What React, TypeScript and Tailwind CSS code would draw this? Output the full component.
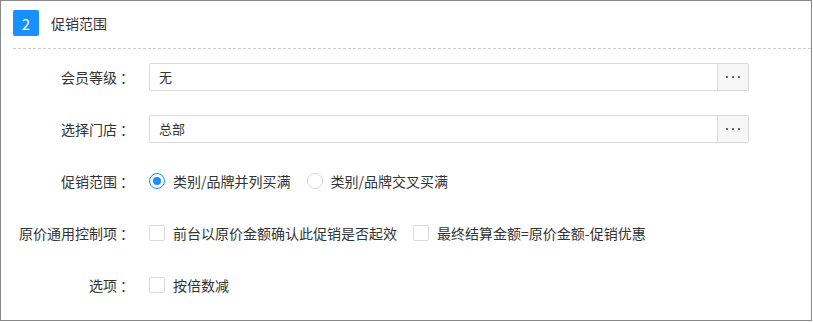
import React from "react";

const font = { fontFamily: '"Noto Sans CJK SC", "Noto Sans", sans-serif' };

function Label({ text }: { text: string }) {
  return (
    <div className="w-[130px] shrink-0 text-right text-[14px] leading-[20px] text-[#333]">
      {text}
      <span className="inline-block translate-x-[3px]">：</span>
    </div>
  );
}

function PickerInput({ value }: { value: string }) {
  return (
    <div className="ml-[18px] flex h-[28px] w-[600px] rounded-[2px] border border-[#d9d9d9] bg-white">
      <div className="flex flex-1 items-center pl-[9px] text-[13px] leading-[18px] text-[#333]">{value}</div>
      <div className="flex w-[31px] items-center justify-center gap-[4px] border-l border-[#d9d9d9] bg-[#f7f7f7]">
        <span className="h-[2px] w-[2px] bg-[#666]" />
        <span className="h-[2px] w-[2px] bg-[#666]" />
        <span className="h-[2px] w-[2px] bg-[#666]" />
      </div>
    </div>
  );
}

function Radio({ checked, text }: { checked?: boolean; text: string }) {
  return (
    <div className="mr-[16px] flex items-center">
      <span
        className={
          checked
            ? "flex h-[16px] w-[16px] items-center justify-center rounded-full border border-[#1890ff] bg-white"
            : "flex h-[16px] w-[16px] items-center justify-center rounded-full border border-[#d9d9d9] bg-white"
        }
      >
        {checked ? <span className="h-[8px] w-[8px] rounded-full bg-[#1890ff]" /> : null}
      </span>
      <span className="ml-[8px] text-[14px] leading-[20px] text-[#333]">{text}</span>
    </div>
  );
}

function Check({ text }: { text: string }) {
  return (
    <div className="mr-[16px] flex items-center">
      <span className="h-[16px] w-[16px] rounded-[2px] border border-[#d9d9d9] bg-white" />
      <span className="ml-[8px] text-[14px] leading-[20px] text-[#333]">{text}</span>
    </div>
  );
}

export default function App() {
  return (
    <div style={font} className="h-[321px] w-[812px] border border-[#888] bg-white">
      <div className="ml-[12px] flex items-center gap-[12px] border-b border-dashed border-[#ccc] pb-[12px] pt-[9px]">
        <div className="flex h-[26px] w-[26px] items-center justify-center rounded-[2px] bg-[#1890ff] text-[15px] leading-none text-white">
          2
        </div>
        <div className="text-[14px] leading-[20px] text-[#333]">促销范围</div>
      </div>
      <div className="mt-[2px]">
        <div className="flex h-[52px] items-center">
          <Label text="会员等级" />
          <PickerInput value="无" />
        </div>
        <div className="flex h-[52px] items-center">
          <Label text="选择门店" />
          <PickerInput value="总部" />
        </div>
        <div className="flex h-[52px] items-center">
          <Label text="促销范围" />
          <div className="ml-[18px] flex items-center">
            <Radio checked text="类别/品牌并列买满" />
            <Radio text="类别/品牌交叉买满" />
          </div>
        </div>
        <div className="flex h-[52px] items-center">
          <Label text="原价通用控制项" />
          <div className="ml-[18px] flex items-center">
            <Check text="前台以原价金额确认此促销是否起效" />
            <Check text="最终结算金额=原价金额-促销优惠" />
          </div>
        </div>
        <div className="flex h-[52px] items-center">
          <Label text="选项" />
          <div className="ml-[18px] flex items-center">
            <Check text="按倍数减" />
          </div>
        </div>
      </div>
    </div>
  );
}
